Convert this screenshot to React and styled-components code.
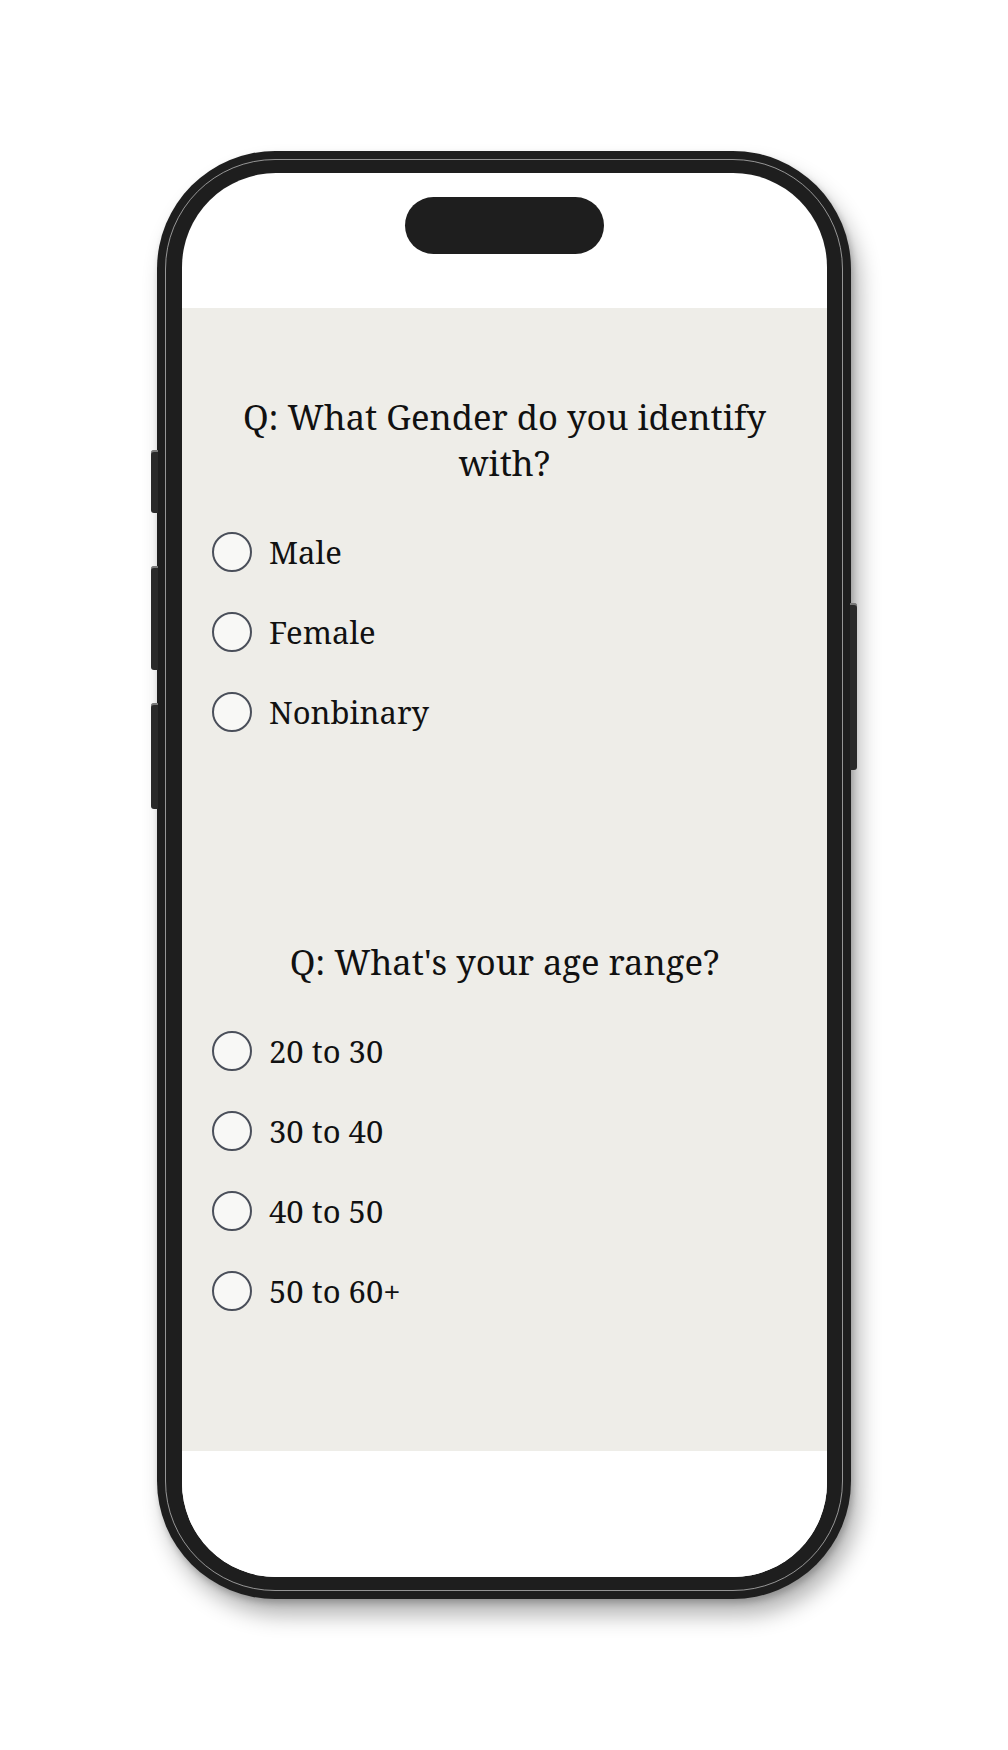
import React from "react";
import styled, { createGlobalStyle } from "styled-components";

const GlobalStyle = createGlobalStyle`
  html, body {
    margin: 0;
    padding: 0;
    background: #ffffff;
  }
  body {
    font-family: "Noto Serif", "DejaVu Serif", serif;
  }
`;

const questions = [
  {
    id: "gender",
    title: "Q: What Gender do you identify with?",
    options: ["Male", "Female", "Nonbinary"],
  },
  {
    id: "age",
    title: "Q: What's your age range?",
    options: ["20 to 30", "30 to 40", "40 to 50", "50 to 60+"],
  },
];

const App = () => {
  return (
    <React.Fragment>
      <GlobalStyle />
      <Page>
        <Phone>
          <SideButton side="left" top={299} height={63} />
          <SideButton side="left" top={415} height={104} />
          <SideButton side="left" top={552} height={106} />
          <SideButton side="right" top={452} height={167} />
          <Screen>
            <TopBar>
              <Island />
            </TopBar>
            <Content>
              {questions.map((q, i) => (
                <Question key={q.id} first={i === 0}>
                  <Title>{q.title}</Title>
                  <Options>
                    {q.options.map((opt) => (
                      <Option key={opt}>
                        <Radio type="radio" name={q.id} value={opt} />
                        <span>{opt}</span>
                      </Option>
                    ))}
                  </Options>
                </Question>
              ))}
            </Content>
            <BottomBar />
          </Screen>
        </Phone>
      </Page>
    </React.Fragment>
  );
};

const Page = styled.div`
  width: 1008px;
  height: 1750px;
  display: flex;
  justify-content: center;
  padding-top: 151px;
  box-sizing: border-box;
`;

const Phone = styled.div`
  position: relative;
  width: 694px;
  height: 1448px;
  box-sizing: border-box;
  padding: 22px 24px 22px 25px;
  border-radius: 118px;
  background: #1e1e1e;
  box-shadow: 8px 16px 22px rgba(0, 0, 0, 0.3), 2px 4px 6px rgba(0, 0, 0, 0.2);
  display: flex;

  &::before {
    content: "";
    position: absolute;
    inset: 8px;
    border-radius: 110px;
    border: 1.5px solid rgba(190, 190, 190, 0.75);
    pointer-events: none;
  }
`;

const SideButton = styled.div`
  position: absolute;
  top: ${(p) => p.top}px;
  height: ${(p) => p.height}px;
  width: 7px;
  background: #2a2a2a;
  ${(p) => (p.side === "left" ? "left: -6px;" : "right: -6px;")}
  border-radius: ${(p) => (p.side === "left" ? "3px 0 0 3px" : "0 3px 3px 0")};
  box-shadow: inset 0 2px 0 rgba(200, 200, 200, 0.5);
`;

const Screen = styled.div`
  position: relative;
  flex: 1;
  border-radius: 94px;
  background: #ffffff;
  overflow: hidden;
  display: flex;
  flex-direction: column;
`;

const TopBar = styled.div`
  height: 135px;
  display: flex;
  justify-content: center;
  padding-top: 24px;
  box-sizing: border-box;
`;

const Island = styled.div`
  width: 199px;
  height: 57px;
  border-radius: 29px;
  background: #1e1e1e;
`;

const Content = styled.div`
  height: 1143px;
  background: #eeede8;
  display: flex;
  flex-direction: column;
  padding: 86px 30px 0 30px;
  box-sizing: border-box;
`;

const BottomBar = styled.div`
  flex: 1;
  background: #ffffff;
`;

const Question = styled.div`
  display: flex;
  flex-direction: column;
  margin-top: ${(p) => (p.first ? "0" : "207px")};
`;

const Title = styled.h2`
  margin: 0 auto;
  max-width: 560px;
  text-align: center;
  font-size: 34.6px;
  line-height: 46px;
  font-weight: 400;
  color: #111111;
`;

const Options = styled.div`
  display: flex;
  flex-direction: column;
  gap: 40px;
  margin-top: 46px;
`;

const Option = styled.label`
  display: flex;
  align-items: center;
  gap: 17px;
  height: 40px;
  font-size: 31px;
  color: #111111;
`;

const Radio = styled.input`
  appearance: none;
  -webkit-appearance: none;
  margin: 0;
  width: 40px;
  height: 40px;
  flex: none;
  border-radius: 50%;
  border: 2px solid #4a4f5a;
  background: #f8f8f6;
  box-sizing: border-box;
`;

export default App;
